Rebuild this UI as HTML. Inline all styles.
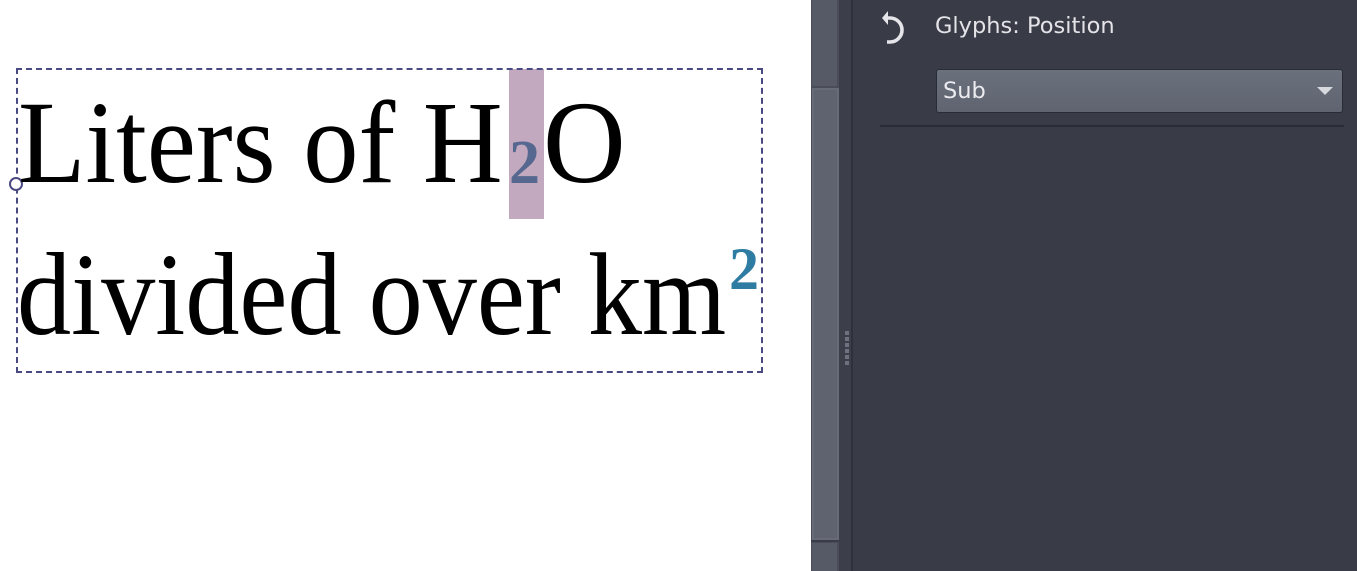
<!DOCTYPE html>
<html><head><meta charset="utf-8"><style>
html,body{margin:0;padding:0;width:1357px;height:571px;overflow:hidden;background:#fff;position:relative}
.a{position:absolute}
.serif{font-family:"Liberation Serif",serif;font-size:118px;line-height:1;white-space:nowrap;transform-origin:0 0;color:#000}
</style></head><body>
<div class="a" style="left:509px;top:69px;width:35px;height:150px;background:#c3a9bf"></div>
<div class="a" style="left:16px;top:68px;width:747px;height:305px;border:2px dashed #4a4a82;box-sizing:border-box"></div>
<div class="a" style="left:9px;top:177px;width:10px;height:10px;border:2px solid #4a4a82;border-radius:50%;background:#fff"></div>
<div class="a serif" style="left:18px;top:84px;transform:scaleX(0.936)">Liters of H</div>
<div class="a serif" style="left:509px;top:132px;font-size:62px;color:#56688f;font-weight:bold">2</div>
<div class="a serif" style="left:543px;top:84px;transform:scaleX(0.97)">O</div>
<div class="a serif" style="left:17px;top:236px;transform:scaleX(0.917)">divided over km</div>
<div class="a serif" style="left:729px;top:239px;font-size:60px;color:#2f7ca3;font-weight:bold">2</div>
<div class="a" style="left:811px;top:0;width:28px;height:571px;background:#4a4d59"></div>
<div class="a" style="left:812px;top:0;width:25px;height:86px;background:#565a66"></div>
<div class="a" style="left:812px;top:88px;width:27px;height:452px;background:#5e636f;box-shadow:inset 0 0 0 2px #666b77"></div>
<div class="a" style="left:811px;top:540px;width:28px;height:2px;background:#3a3c47"></div>
<div class="a" style="left:812px;top:543px;width:25px;height:28px;background:#565a66"></div>
<div class="a" style="left:839px;top:0;width:12px;height:571px;background:#3c3e4a"></div>
<div class="a" style="left:845px;top:331px;width:4px;height:34px;background:repeating-linear-gradient(#6e7280 0 4px,transparent 4px 6px)"></div>
<div class="a" style="left:851px;top:0;width:2px;height:571px;background:#2e303b"></div>
<div class="a" style="left:853px;top:0;width:504px;height:571px;background:#393b47"></div>
<svg class="a" style="left:878px;top:8px" width="34" height="38" viewBox="0 0 34 38">
<path d="M9 10 H12 A9 9 0 0 1 12 34 H9" fill="none" stroke="#e6e6ea" stroke-width="3.6"/>
<path d="M4 10 L10 3 L10 17 Z" fill="#e6e6ea"/>
</svg>
<div class="a" style="left:935px;top:13px;font-family:'DejaVu Sans','Liberation Sans',sans-serif;font-size:22.5px;color:#e4e4e8">Glyphs: Position</div>
<div class="a" style="left:936px;top:69px;width:407px;height:44px;box-sizing:border-box;border:1px solid #2a2c35;border-radius:3px;background:linear-gradient(#6b707d,#5f6470)"></div>
<div class="a" style="left:943px;top:78px;font-family:'DejaVu Sans','Liberation Sans',sans-serif;font-size:22.5px;color:#ececf0">Sub</div>
<div class="a" style="left:1317px;top:87px;width:0;height:0;border-left:8px solid transparent;border-right:8px solid transparent;border-top:8px solid #d8d9de"></div>
<div class="a" style="left:880px;top:125px;width:464px;height:2px;background:#2a2c35"></div>
</body></html>
